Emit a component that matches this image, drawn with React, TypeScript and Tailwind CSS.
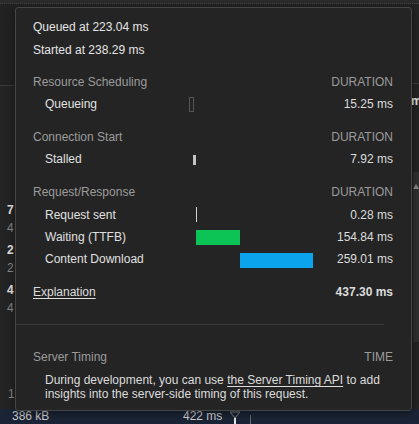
import React from "react";

type Row = {
  label: string;
  value: string;
  bar: React.ReactNode;
  tall?: boolean;
};

const sections: { title: string; rows: Row[] }[] = [
  {
    title: "Resource Scheduling",
    rows: [
      {
        label: "Queueing",
        value: "15.25 ms",
        bar: <div className="absolute left-[-1px] top-[4px] w-[5px] h-[15px] border border-[#555555]" />,
      },
    ],
  },
  {
    title: "Connection Start",
    rows: [
      {
        label: "Stalled",
        value: "7.92 ms",
        bar: <div className="absolute left-[3px] top-[7px] w-[3px] h-[10px] bg-[#c4c4c4]" />,
      },
    ],
  },
  {
    title: "Request/Response",
    rows: [
      {
        label: "Request sent",
        value: "0.28 ms",
        tall: true,
        bar: <div className="absolute left-[6px] top-[4px] w-px h-[15px] bg-[#d0d0d0]" />,
      },
      {
        label: "Waiting (TTFB)",
        value: "154.84 ms",
        bar: <div className="absolute left-[6px] top-[4px] w-[44px] h-[15px] bg-[#0bc455]" />,
      },
      {
        label: "Content Download",
        value: "259.01 ms",
        bar: <div className="absolute left-[50px] top-[5px] w-[73px] h-[15px] bg-[#0aa3ec]" />,
      },
    ],
  },
];

function TimingRow({ row }: { row: Row }) {
  return (
    <div className={`flex items-center ${row.tall ? "h-[23px]" : "h-[22px]"}`}>
      <div className="w-[157px] pl-[12px] text-[#e0e0e0]">{row.label}</div>
      <div className="relative w-[123px] h-full">{row.bar}</div>
      <div className="flex-1 text-right text-[#dcdcdc]">{row.value}</div>
    </div>
  );
}

function Popover() {
  return (
    <div className="absolute left-[15px] top-[7px] w-[397px] h-[404px] rounded-[3px] border border-[#464646] bg-[#242424] shadow-[0_2px_8px_rgba(0,0,0,0.5)] pt-[8px]">
      <div className="pl-[17px] pr-[18px] text-[12px] leading-[22px]">
        <div className="h-[23px] text-[#e4e4e4]">Queued at 223.04 ms</div>
        <div className="h-[22px] text-[#e4e4e4]">Started at 238.29 ms</div>

        {sections.map((s, i) => (
          <div key={s.title} className={i === 0 ? "mt-[10px]" : "mt-[11px]"}>
            <div className="flex h-[22px] text-[#9b9b9b]">
              <div className="flex-1">{s.title}</div>
              <div>DURATION</div>
            </div>
            {s.rows.map((r) => (
              <TimingRow key={r.label} row={r} />
            ))}
          </div>
        ))}

        <div className="mt-[11px] flex h-[22px]">
          <a className="flex-1 text-[#dcdcdc] underline underline-offset-2">Explanation</a>
          <div className="font-bold text-[#dcdcdc]">437.30 ms</div>
        </div>
      </div>

      <div className="mt-[21px] mr-[27px] h-px bg-[#3a3a3a]" />

      <div className="pl-[17px] pr-[18px] text-[12px]">
        <div className="mt-[21px] flex h-[22px] leading-[22px] text-[#9b9b9b]">
          <div className="flex-1">Server Timing</div>
          <div>TIME</div>
        </div>
        <p className="mt-[5px] pl-[12px] leading-[14px] text-[#dcdcdc]">
          During development, you can use{" "}
          <a className="underline underline-offset-2">the Server Timing API</a> to add insights into the
          server-side timing of this request.
        </p>
      </div>
    </div>
  );
}

function Background() {
  const nums = [
    ["7", "4"],
    ["2", "2"],
    ["4", "4"],
  ];
  return (
    <div className="flex flex-col w-full h-full">
      <div className="h-[4px] bg-[#2b2b2b] border-b border-dotted border-[#444444]" />
      <div className="flex flex-1 text-[12px]">
        <div className="w-[15px] overflow-hidden">
          <div className="h-[82px] bg-[#222222] border-b border-[#3a3a3a]" />
          <div className="h-[115px]" />
          {nums.map(([a, b], i) => (
            <div key={i} className="h-[40px] pl-[7px] leading-[18px]">
              <div className="font-bold text-[#e6e6e6]">{a}</div>
              <div className="text-[#8a8a8a]">{b}</div>
            </div>
          ))}
          <div className="mt-[66px] pl-[8px] leading-[14px] text-[#8a8a8a]">1</div>
        </div>
        <div className="flex-1" />
        <div className="w-[8px] flex flex-col overflow-hidden">
          <div className="h-[80px] border-b border-[#3a3a3a]" />
          <div className="mt-[10px] leading-[14px] font-bold text-[#e6e6e6]">ms</div>
          <div className="mt-[64px] ml-[2px] h-[170px] bg-[#2f2f2f] flex justify-center pt-[12px]">
            <svg width="6" height="5" viewBox="0 0 6 5">
              <path d="M3 0 L6 5 L0 5 Z" fill="#8a8a8a" />
            </svg>
          </div>
        </div>
      </div>
      <div className="h-[15px] bg-[#1b2436] flex items-center text-[12px] leading-[15px] text-[#d2d2d2]">
        <span className="ml-[12px] w-[171px]">386 kB</span>
        <span>422 ms</span>
        <svg className="ml-[7px]" width="12" height="15" viewBox="0 0 12 15">
          <path d="M1 3 L11 3 L6 9 Z" fill="none" stroke="#8a8a8a" strokeWidth="1" />
          <rect x="5" y="9" width="2" height="6" fill="#e6e6e6" />
        </svg>
        <div className="ml-[9px] w-px h-[9px] mt-[6px] bg-[#6a6a6a]" />
      </div>
    </div>
  );
}

export default function App() {
  return (
    <div className="relative w-[419px] h-[424px] overflow-hidden bg-[#242424] font-['Liberation_Sans',Arial,sans-serif]">
      <Background />
      <Popover />
    </div>
  );
}
